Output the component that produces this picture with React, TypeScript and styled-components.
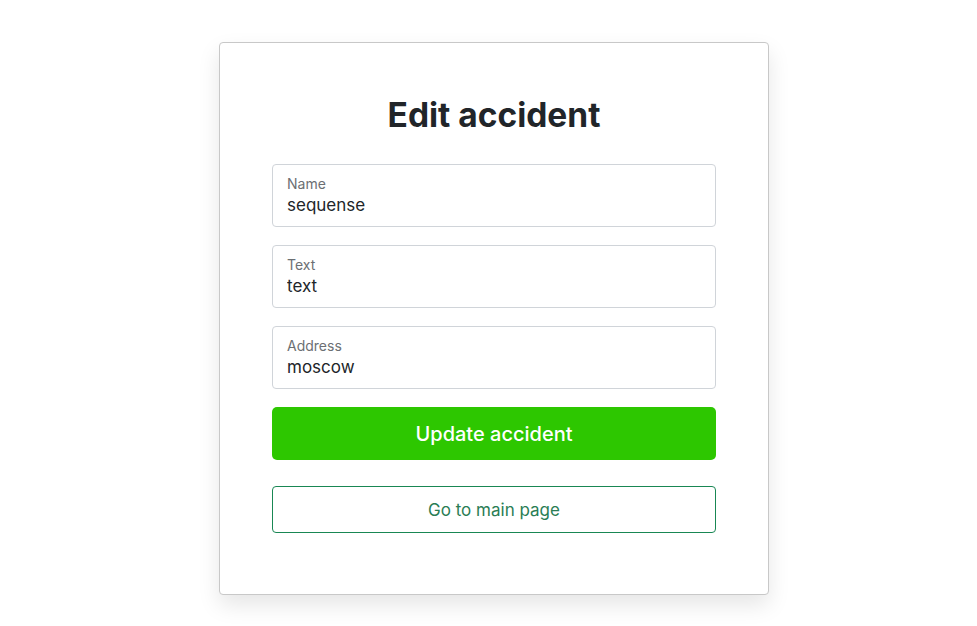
import styled, { createGlobalStyle } from "styled-components";

const GlobalStyle = createGlobalStyle`
  body {
    margin: 0;
    background: #ffffff;
    font-family: Inter, "Noto Sans", sans-serif;
    color: #212529;
  }
`;

const Field = (props: { label: string; value: string }) => {
  const { label, value } = props;
  return (
    <SField>
      <SLabel>{label}</SLabel>
      <SInput defaultValue={value} />
    </SField>
  );
};

export default function App() {
  return (
    <>
      <GlobalStyle />
      <SPage>
        <SCard>
          <STitle>Edit accident</STitle>
          <SForm>
            <Field label="Name" value="sequense" />
            <Field label="Text" value="text" />
            <Field label="Address" value="moscow" />
            <SSubmit type="button">Update accident</SSubmit>
          </SForm>
          <SBack type="button">Go to main page</SBack>
        </SCard>
      </SPage>
    </>
  );
}

const SPage = styled.div`
  display: flex;
  justify-content: center;
  padding: 42px 0 30px 11px;
`;

const SCard = styled.div`
  width: 550px;
  box-sizing: border-box;
  padding: 52px 52px 61px;
  background: #fff;
  border: 1px solid #c8c8c8;
  border-radius: 4px;
  box-shadow: 0 10px 22px rgba(0, 0, 0, 0.1);
  display: flex;
  flex-direction: column;
`;

const STitle = styled.h1`
  margin: 0 0 29px;
  font-size: 33.5px;
  line-height: 40px;
  font-weight: 700;
  text-align: center;
  color: #212529;
`;

const SForm = styled.div`
  display: flex;
  flex-direction: column;
  gap: 18px;
`;

const SField = styled.div`
  height: 63px;
  box-sizing: border-box;
  border: 1px solid #d0d4d9;
  border-radius: 4px;
  padding: 10px 14px 0;
  display: flex;
  flex-direction: column;
`;

const SLabel = styled.label`
  font-size: 14px;
  line-height: 17px;
  color: #6c6f73;
`;

const SInput = styled.input`
  border: none;
  outline: none;
  padding: 0;
  margin: 2px 0 0;
  font-family: Inter, "Noto Sans", sans-serif;
  font-size: 17px;
  line-height: 22px;
  color: #212529;
  background: transparent;
`;

const SSubmit = styled.button`
  height: 53px;
  border: none;
  border-radius: 5px;
  background: #2dc700;
  color: #fff;
  font-family: Inter, "Noto Sans", sans-serif;
  font-size: 20px;
  font-weight: 500;
  cursor: pointer;
`;

const SBack = styled.button`
  margin-top: 26px;
  height: 47px;
  border: 1px solid #198754;
  border-radius: 4px;
  background: #fff;
  color: #2a7d55;
  font-family: Inter, "Noto Sans", sans-serif;
  font-size: 17px;
  cursor: pointer;
`;
